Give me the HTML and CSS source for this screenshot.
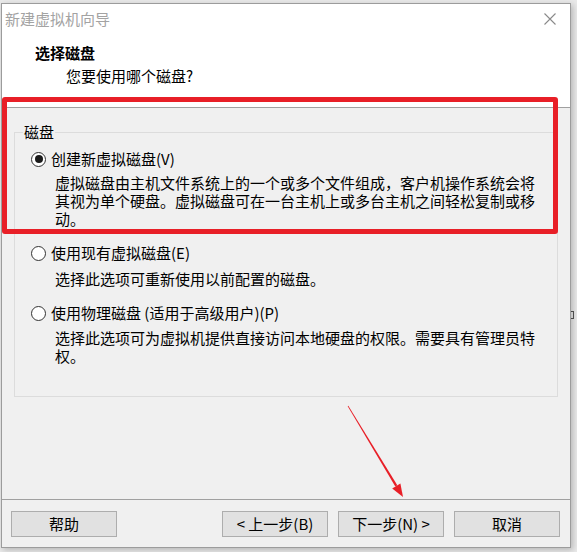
FILE: index.html
```html
<!DOCTYPE html>
<html lang="zh-CN">
<head>
<meta charset="utf-8">
<title>新建虚拟机向导</title>
<link rel="stylesheet" href="styles.css">
</head>
<body>
<div class="bg-mark"></div>
<div class="window">
  <div class="titlebar">
    <span class="title">新建虚拟机向导</span>
    <svg class="close" width="12" height="12" viewBox="0 0 12 12"><path d="M0.5 0.5 L11.5 11.5 M11.5 0.5 L0.5 11.5" stroke="#8a8a8a" stroke-width="1.1" fill="none"/></svg>
  </div>
  <div class="header">
    <div class="heading">选择磁盘</div>
    <div class="subheading">您要使用哪个磁盘?</div>
  </div>
  <div class="content">
    <div class="group">
      <div class="group-title">磁盘</div>
      <div class="option first">
        <span class="radio checked"></span>
        <span class="option-label">创建新虚拟磁盘(V)</span>
      </div>
      <div class="desc">虚拟磁盘由主机文件系统上的一个或多个文件组成，客户机操作系统会将<br>其视为单个硬盘。虚拟磁盘可在一台主机上或多台主机之间轻松复制或移<br>动。</div>
      <div class="option">
        <span class="radio"></span>
        <span class="option-label">使用现有虚拟磁盘(E)</span>
      </div>
      <div class="desc">选择此选项可重新使用以前配置的磁盘。</div>
      <div class="option">
        <span class="radio"></span>
        <span class="option-label">使用物理磁盘 (适用于高级用户)(P)</span>
      </div>
      <div class="desc">选择此选项可为虚拟机提供直接访问本地硬盘的权限。需要具有管理员特<br>权。</div>
    </div>
  </div>
  <div class="footer">
    <button class="btn help">帮助</button>
    <button class="btn back">&lt; 上一步(B)</button>
    <button class="btn">下一步(N) &gt;</button>
    <button class="btn">取消</button>
  </div>
</div>
<div class="highlight"></div>
<svg class="arrow" width="80" height="110" viewBox="0 0 80 110">
  <polygon points="7.7,6.2 8.3,5.8 57.3,85.3 55.3,86.5" fill="#e81f27"/>
  <polygon points="63,97 52.2,88.4 60.4,83.4" fill="#e81f27"/>
</svg>
</body>
</html>
```
FILE: styles.css
```css
* {
  box-sizing: border-box;
}

html, body {
  margin: 0;
  padding: 0;
}

body {
  width: 577px;
  height: 552px;
  overflow: hidden;
  background: #e9e9e9;
  font-family: "Noto Sans CJK SC", "Microsoft YaHei", sans-serif;
  font-size: 15px;
  color: #000;
  position: relative;
}

.bg-mark {
  position: absolute;
  left: 569px;
  top: 311px;
  width: 5px;
  height: 8px;
  border: 1px solid #555;
  border-left: none;
  z-index: -1;
}

.window {
  margin: 3px 0 0 1px;
  width: 570px;
  height: 545px;
  border: 1px solid #9c9c9c;
  background: #f0f0f0;
  display: flex;
  flex-direction: column;
  box-shadow: 2px 2px 6px rgba(0, 0, 0, 0.22);
}

.titlebar {
  height: 32px;
  background: #fff;
  display: flex;
  align-items: center;
  padding-left: 3px;
  padding-right: 14px;
}

.title {
  color: #a3a3a3;
  line-height: 20px;
  margin-top: -3px;
}

.close {
  margin-left: auto;
  margin-top: -3px;
  display: block;
}

.header {
  height: 72px;
  background: #fff;
  border-bottom: 1px solid #a0a0a0;
  padding-top: 7px;
}

.heading {
  font-weight: bold;
  line-height: 20px;
  padding-left: 33px;
}

.subheading {
  line-height: 20px;
  margin-top: 3px;
  padding-left: 64px;
}

.content {
  flex: 1;
  background: #f0f0f0;
  padding-top: 24px;
  padding-left: 12px;
}

.group {
  width: 544px;
  height: 265px;
  border: 1px solid #dcdcdc;
}

.group-title {
  width: fit-content;
  margin: -10px 0 0 8px;
  padding: 0 1px;
  line-height: 18px;
  background: #f0f0f0;
}

.option {
  display: flex;
  align-items: center;
  height: 20px;
  margin-top: 15px;
  padding-left: 16px;
}

.option.first {
  margin-top: 8px;
}

.radio {
  width: 15px;
  height: 15px;
  border-radius: 50%;
  border: 1px solid #333;
  background: #fff;
  display: flex;
  align-items: center;
  justify-content: center;
  flex-shrink: 0;
}

.radio.checked::after {
  content: "";
  width: 8px;
  height: 8px;
  border-radius: 50%;
  background: #1a1a1a;
}

.option-label {
  margin-left: 5px;
  line-height: 20px;
}

.desc {
  margin: 7px 0 0 40px;
  width: 500px;
  line-height: 18px;
  white-space: nowrap;
}

.option.first + .desc {
  margin-top: 5px;
}

.desc:last-child {
  margin-top: 6px;
}

.footer {
  height: 48px;
  border-top: 1px solid #a0a0a0;
  display: flex;
  align-items: flex-start;
  padding: 11px 10px 0 9px;
  gap: 10px;
}

.btn {
  width: 106px;
  height: 26px;
  border: 1px solid #adadad;
  background: #e1e1e1;
  font-family: inherit;
  font-size: 15px;
  line-height: 22px;
  color: #000;
  padding: 0;
  margin: 0;
}

.btn.back {
  margin-left: auto;
}

.highlight {
  position: absolute;
  left: 2px;
  top: 97px;
  width: 556px;
  height: 137px;
  border: 5px solid #e81f27;
  border-radius: 3px;
}

.arrow {
  position: absolute;
  left: 340px;
  top: 400px;
}
```
